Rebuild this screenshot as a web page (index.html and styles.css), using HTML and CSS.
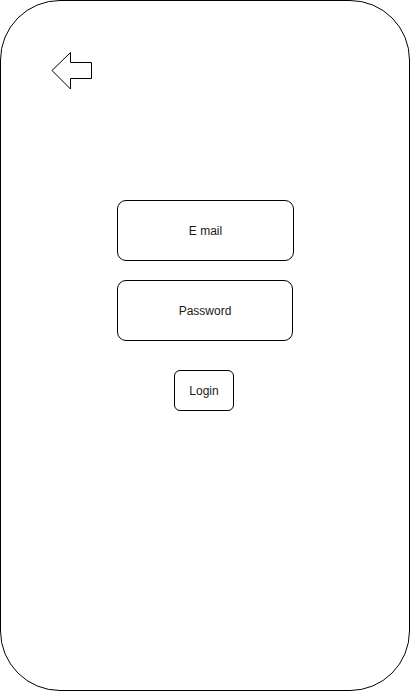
FILE: index.html
```
<!doctype html>
<html lang="en">
<head>
    <meta charset="UTF-8">
    <title>Login</title>
    <link rel="stylesheet" href="styles.css">
</head>
<body>
    <div class="phone">
        <div class="back">
            <svg width="41" height="40" viewBox="51 51 41 40">
                <polygon points="52,70.5 70.5,52.5 70.5,62.5 91.5,62.5 91.5,78.5 70.5,78.5 70.5,89" fill="#fff" stroke="#000" stroke-width="1"/>
            </svg>
        </div>
        <form class="login-form">
            <div class="field field-email">E mail</div>
            <div class="field field-password">Password</div>
            <div class="btn">Login</div>
        </form>
    </div>
</body>
</html>
```

FILE: styles.css
```
html, body {
    margin: 0;
    padding: 0;
    background: #fff;
}
body {
    font-family: "Liberation Sans", Arial, sans-serif;
    font-size: 12px;
    color: #1a1a1a;
}
.phone {
    box-sizing: border-box;
    width: 410px;
    height: 691px;
    border: 1px solid #000;
    border-radius: 60px;
    display: flex;
    flex-direction: column;
}
.back {
    margin: 50px 0 0 50px;
    height: 40px;
}
.back svg {
    display: block;
}
.login-form {
    margin-top: 109px;
    display: flex;
    flex-direction: column;
    align-items: center;
}
.field {
    box-sizing: border-box;
    height: 61px;
    border: 1px solid #000;
    border-radius: 9px;
    display: flex;
    align-items: center;
    justify-content: center;
}
.field-email {
    width: 177px;
    margin-left: 1px;
}
.field-password {
    width: 176px;
    margin-top: 19px;
}
.btn {
    box-sizing: border-box;
    width: 60px;
    height: 41px;
    margin-top: 29px;
    margin-right: 2px;
    border: 1px solid #000;
    border-radius: 6px;
    display: flex;
    align-items: center;
    justify-content: center;
}
```
